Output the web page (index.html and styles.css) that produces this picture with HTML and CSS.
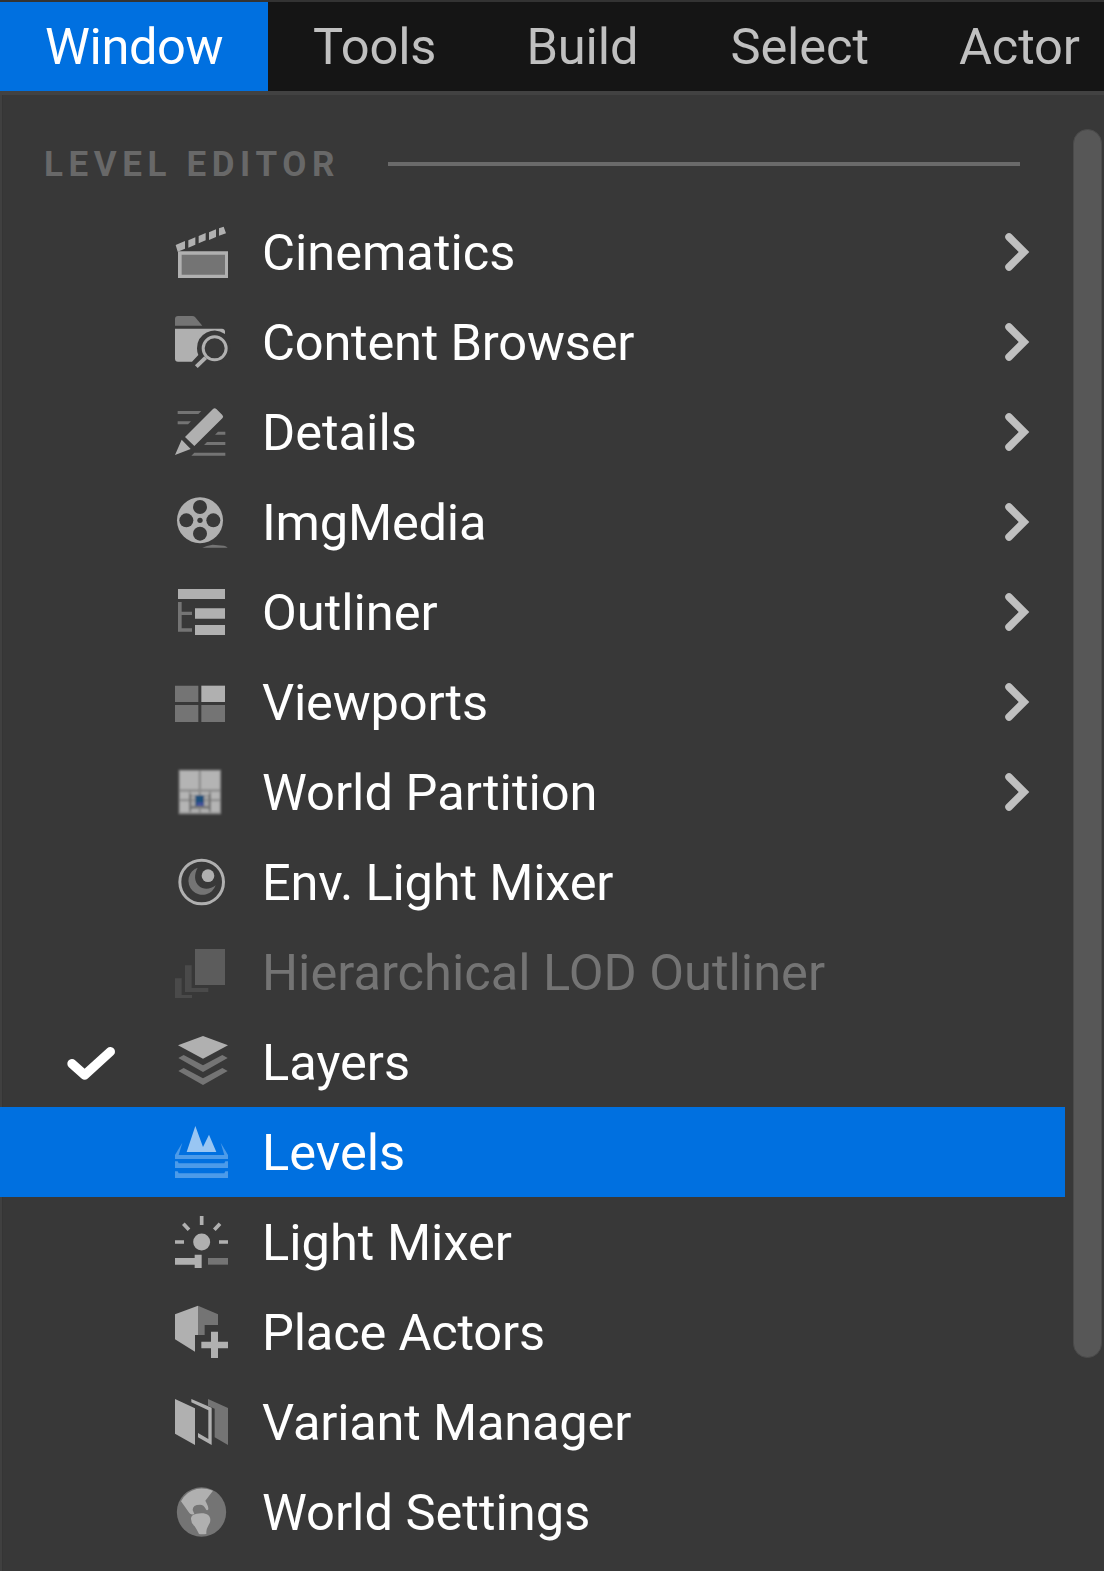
FILE: index.html
```html
<!DOCTYPE html>
<html lang="en">
<head>
<meta charset="utf-8">
<title>Window menu</title>
<link rel="stylesheet" href="styles.css">
</head>
<body>
<nav class="menubar">
  <span class="tab active">Window</span><span class="tab">Tools</span><span class="tab build">Build</span><span class="tab">Select</span><span class="tab">Actor</span>
</nav>
<main class="panel">
  <div class="list">
    <div class="heading"><span class="title">LEVEL EDITOR</span><span class="rule"></span></div>

    <div class="row"><span class="mark"></span>
      <svg class="icon" viewBox="36 36 180 180"><path class="d" d="M60 130h138v68H60z"/><path class="l" fill-rule="evenodd" d="M54 124h150v80H54zM65 134v60h130v-60zM47 105l28-12v23l-22 9zM85 91l21-9v22l-21 9zM116 78l21-9v22l-21 9zM147 67l21-9v23l-21 9zM177 55l14-5 7 20-21 7z"/></svg>
      <span class="label">Cinematics</span><svg class="chevron" viewBox="0 0 30 44"><path d="M7 7l15 15L7 37"/></svg></div>

    <div class="row"><span class="mark"></span>
      <svg class="icon" viewBox="36 306 180 180"><path class="d" d="M45 347v-20q0-9 9-9h43q5 0 8 3l22 26z"/><path class="l" d="M45 356h141q8 0 9 8v8a53 53 0 0 0-84 43q0 12 4 20l-19 20H54q-9 0-9-9z"/><circle class="hole" cx="164" cy="415" r="48"/><circle class="ls" cx="164" cy="415" r="34.500" stroke-width="9"/><path class="ls" stroke-width="12" d="M109 470l28-27"/></svg>
      <span class="label tight">Content Browser</span><svg class="chevron" viewBox="0 0 30 44"><path d="M7 7l15 15L7 37"/></svg></div>

    <div class="row"><span class="mark"></span>
      <svg class="icon" viewBox="36 36 180 180"><path class="d" d="M53 63h71l-9 9H53zM53 94h40l-9 9H53zM174 125h22v9h-31zM141 156h55v9h-64zM103 188h93v9H94z"/><path class="l" d="M75 141l84-84q5-5 10 0l18 18q5 5 0 10l-84 83zM65 149l27 28-47 18z"/></svg>
      <span class="label">Details</span><svg class="chevron" viewBox="0 0 30 44"><path d="M7 7l15 15L7 37"/></svg></div>

    <div class="row"><span class="mark"></span>
      <svg class="icon" viewBox="36 306 180 180"><circle class="l" cx="120" cy="391" r="69"/><g class="hole"><circle cx="120" cy="351" r="21"/><circle cx="120" cy="431" r="21"/><circle cx="79" cy="391" r="21"/><circle cx="160" cy="391" r="21"/><circle cx="120" cy="391" r="8"/></g><path class="d" d="M127 473q12-6 31-9l34 3q7 1 11 6z"/></svg>
      <span class="label tight">ImgMedia</span><svg class="chevron" viewBox="0 0 30 44"><path d="M7 7l15 15L7 37"/></svg></div>

    <div class="row"><span class="mark"></span>
      <svg class="icon" viewBox="36 36 180 180"><path class="l" d="M54 57h141v30H54zM105 115h90v31h-90zM105 165h90v30h-90z"/><path class="d" d="M54 96h11v29h31v10H65v40h31v10H54z"/></svg>
      <span class="label">Outliner</span><svg class="chevron" viewBox="0 0 30 44"><path d="M7 7l15 15L7 37"/></svg></div>

    <div class="row"><span class="mark"></span>
      <svg class="icon" viewBox="36 306 180 180"><path class="d" d="M45 347h70v49H45zM45 405h70v51H45zM124 405h71v51h-71z"/><path class="l" d="M124 347h71v49h-71z"/></svg>
      <span class="label tight">Viewports</span><svg class="chevron" viewBox="0 0 30 44"><path d="M7 7l15 15L7 37"/></svg></div>

    <div class="row"><span class="mark"></span>
      <svg class="icon" viewBox="36 36 180 180"><defs><filter id="soft"><feGaussianBlur stdDeviation="2.4"/></filter></defs><g filter="url(#soft)"><path fill="#8c8c8c" d="M56 59h127v134H56z"/><path fill="#b4b4b4" d="M60 63h56v55H60zM123 63h56v55h-56zM60 125h27v22H60zM92 125h24v10H92zM123 125h24v10h-24zM153 125h26v22h-26zM60 154h27v33H60zM153 154h26v33h-26zM93 178h23v9H93zM123 178h24v9h-24z"/><path fill="#747474" d="M87 132h7v50h-7zM146 132h7v50h-7zM94 168h52v6H94z"/><path fill="#a6a6a6" d="M94 138h12v10H94zM94 154h12v14H94zM133 138h12v10h-12zM133 154h12v14h-12z"/><path fill="#1c4f7c" d="M106 136h26v32h-26z"/><path fill="#4650a0" d="M111 158h20v9h-20z"/></g></svg>
      <span class="label">World Partition</span><svg class="chevron" viewBox="0 0 30 44"><path d="M7 7l15 15L7 37"/></svg></div>

    <div class="row"><span class="mark"></span>
      <svg class="icon" viewBox="36 306 180 180"><circle class="ls" cx="125" cy="396" r="65.500" stroke-width="9"/><path class="d" d="M113 353a42 42 0 1 0 54 53c-15 12-37 14-50 2-15-13-15-36-4-55z"/><circle class="l" cx="144" cy="377" r="19"/></svg>
      <span class="label tight">Env. Light Mixer</span></div>

    <div class="row disabled"><span class="mark"></span>
      <svg class="icon" viewBox="36 36 180 180"><path class="l" d="M105 57h90v108h-90z"/><path class="d" d="M75 106h20v68h50v12H75zM45 145h20v50h31v9H45z"/></svg>
      <span class="label">Hierarchical LOD Outliner</span></div>

    <div class="row"><span class="mark"><svg viewBox="180 36 180 180"><path class="check" d="M216 131l38 34 77-70"/></svg></span>
      <svg class="icon" viewBox="36 306 180 180"><path class="l" d="M129 318l75 28-75 40-75-40z"/><path class="d" d="M55 384l16-9 58 31 58-31 16 9-74 42zM55 423l16-9 58 31 58-31 16 9-74 42z"/></svg>
      <span class="label">Layers</span></div>

    <div class="row selected"><span class="mark"></span>
      <svg class="icon" viewBox="36 51 180 180"><path class="l" d="M80 141l26-78 23 63 18-37 22 52z"/><path class="d" d="M45 150l22-37-11 37h137l-11-37 22 37v12H45zM45 169h8l3 6h137l3-6h8v20H45zM45 199h8l3 6h137l3-6h8v20H45z"/></svg>
      <span class="label">Levels</span></div>

    <div class="row"><span class="mark"></span>
      <svg class="icon" viewBox="36 321 180 180"><circle class="l" cx="125" cy="411" r="25.500"/><path class="ls" stroke-width="11" d="M125 333v27M45 411h27M177 411h27M70 356l17 18M180 356l-17 18"/><path class="l" d="M45 459h59v-10h21v40h-21v-10H45z"/><path class="d" d="M144 459h60v20h-60z"/></svg>
      <span class="label">Light Mixer</span></div>

    <div class="row"><span class="mark"></span>
      <svg class="icon" viewBox="36 36 180 180"><path class="l" d="M45 73l69-26v88h-9v50l-60-37z"/><path class="d" d="M114 47l60 26v32h-40v30h-20z"/><path class="l" d="M153 125h21v30h30v20h-30v29h-21v-29h-29v-20h29z"/></svg>
      <span class="label tight">Place Actors</span></div>

    <div class="row"><span class="mark"></span>
      <svg class="icon" viewBox="36 306 180 180"><path class="l" d="M45 327l60 28v110l-60-34zM94 327l61 26v112l-41-23v-13l31 18v-86l-51-24z"/><path class="d" d="M144 327l60 27v111l-40-23v-86l-20-9z"/></svg>
      <span class="label tight">Variant Manager</span></div>

    <div class="row"><span class="mark"></span>
      <svg class="icon" viewBox="36 66 180 180"><circle class="d" cx="124.500" cy="156" r="74"/><path class="l" d="M63 124q16-30 47-37 24-4 49 5l-23 30q10 18 9 26-5 7-9-3-4-10-16-11-22 0-22 16l5 12q-10 4-15-3zM93 177c0-11 10-16 31-17 18 0 27 8 27 20 0 15-13 18-12 42q-14 2-22 0-7-14-13-23-11-10-11-22z"/></svg>
      <span class="label">World Settings</span></div>
  </div>
  <div class="scrollbar"></div>
</main>
</body>
</html>
```

FILE: styles.css
```css
* { box-sizing: border-box; }
body {
  margin: 0;
  height: 1571px;
  overflow: hidden;
  background: #383838;
  font-family: Roboto, "Liberation Sans", sans-serif;
  font-size: 50.6px;
  color: #fff;
}
.menubar {
  display: flex;
  height: 91px;
  border-top: 2px solid #333;
  background: #151515;
  overflow: hidden;
}
.tab {
  flex: none;
  padding: 0 45px;
  line-height: 89px;
  letter-spacing: -0.1px;
  color: #c0c0c0;
}
.tab.active {
  width: 268px;
  letter-spacing: -0.4px;
  background: #0070e0;
  color: #fff;
}
.tab.build { padding-right: 47px; }
.panel {
  display: flex;
  justify-content: space-between;
  height: 1480px;
  border-top: 4px solid #424242;
  background: linear-gradient(to right, #404040 2px, #353535 2px, #353535 3px, #383838 3px);
}
.list { width: 1065px; }
.heading {
  display: flex;
  align-items: center;
  justify-content: space-between;
  height: 112px;
  padding: 26px 45px 0 44px;
}
.title {
  padding-top: 2px;
  font-size: 35px;
  font-weight: 700;
  letter-spacing: 5.6px;
  line-height: 40px;
  white-space: nowrap;
  color: #686868;
}
.rule { width: 632px; height: 4px; background: #6a6a6a; }
.row {
  display: flex;
  align-items: center;
  height: 90px;
  padding-left: 60px;
}
.row.selected { background: #0070e0; }
.mark { width: 60px; height: 60px; }
.mark svg { display: block; width: 60px; height: 60px; }
.check {
  fill: none;
  stroke: #fff;
  stroke-width: 28;
  stroke-linecap: round;
  stroke-linejoin: round;
}
.icon { width: 60px; height: 60px; margin-left: 52px; }
.l { fill: #b0b0b0; }
.d { fill: #747474; }
.ls { fill: none; stroke: #b0b0b0; }
.hole { fill: #383838; }
.disabled .l { fill: #5c5c5c; }
.disabled .d { fill: #4a4a4a; }
.selected .l { fill: #99c6f3; }
.selected .d { fill: #4c9be9; }
.label {
  flex: 1;
  margin-left: 30px;
  padding-top: 2px;
  line-height: 88px;
  white-space: nowrap;
}
.label.tight { letter-spacing: -0.2px; }
.disabled .label { color: #747474; }
.chevron { width: 30px; height: 44px; margin-right: 33px; }
.chevron path {
  fill: none;
  stroke: #c0c0c0;
  stroke-width: 7.5;
  stroke-linecap: round;
}
.scrollbar {
  width: 29px;
  height: 1229px;
  margin: 34px 2px 0 0;
  border: 1px solid #4a4a4a;
  border-radius: 15px;
  background: #575757;
}
```
